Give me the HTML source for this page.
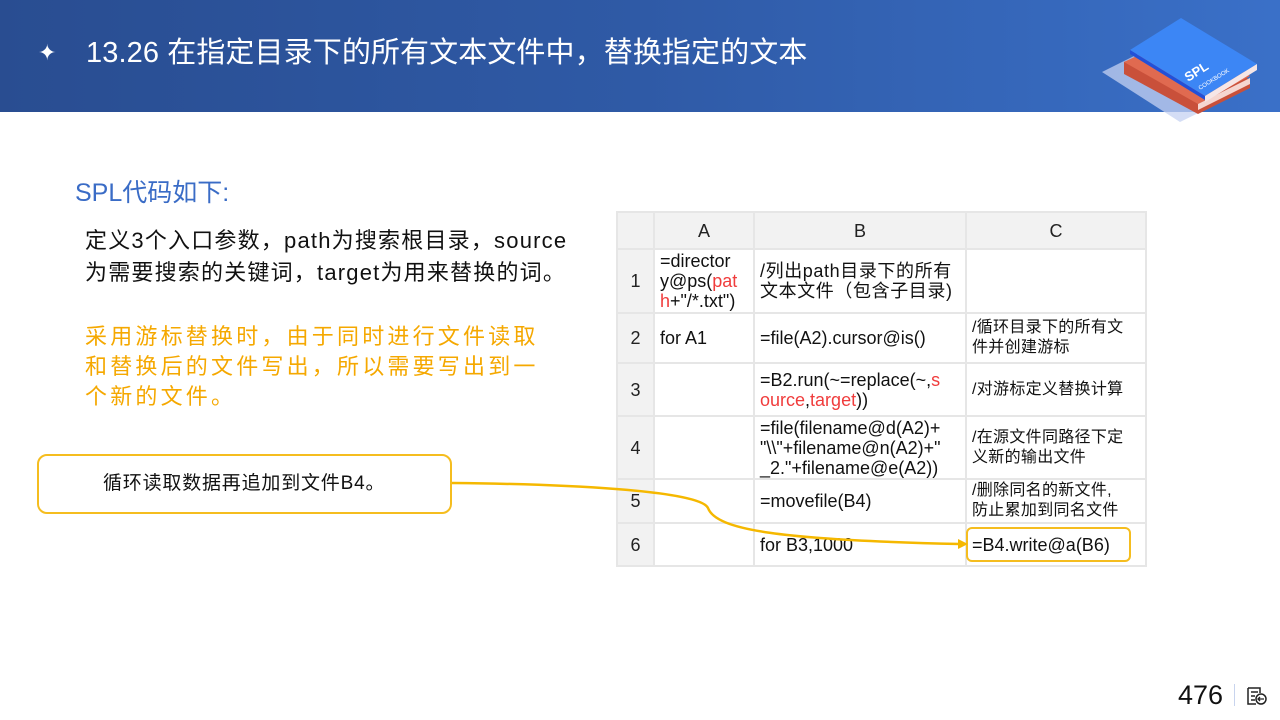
<!DOCTYPE html>
<html><head><meta charset="utf-8"><style>
*{margin:0;padding:0;box-sizing:border-box}
body{width:1280px;height:720px;position:relative;background:#fff;font-family:"Liberation Sans","Noto Sans CJK SC",sans-serif;overflow:hidden}
.hd{position:absolute;left:0;top:0;width:1280px;height:112px;background:linear-gradient(90deg,#294d91 0%,#2f5aa6 50%,#3a70c8 100%)}
.t{position:absolute;left:86px;top:33px;color:#fff;font-size:29px;line-height:40px;white-space:nowrap;letter-spacing:0.1px}
.star{position:absolute;left:38px;top:40px;color:#fff;font-size:22px}
.abs{position:absolute;white-space:nowrap}
table{position:absolute;left:616px;top:211px;border-collapse:collapse;font-size:18px;color:#111}
td{border:2px solid #e6e6e6;vertical-align:middle;padding:0 5px;line-height:20px}
td.h{background:#f2f2f2;text-align:center;color:#222}
td.c{font-size:16px;letter-spacing:0.3px}
.r{color:#f03c3c}
</style></head><body>
<div class="hd"></div>
<div class="star">✦</div>
<div class="t">13.26 在指定目录下的所有文本文件中，替换指定的文本</div>
<svg class="abs" style="left:1095px;top:12px" width="165" height="112" viewBox="1095 12 165 112">
<polygon points="1102,72 1150,48 1225,100 1180,122" fill="#c5d2f2" opacity="0.75"/>
<polygon points="1124,62 1184,40 1250,80 1250,88 1198,114 1124,74" fill="#c9503a"/>
<polygon points="1124,62 1184,34 1250,76 1198,104" fill="#e06a50"/>
<polygon points="1198,104 1250,78 1250,84 1198,110" fill="#f5d6d0"/>
<polygon points="1130,50 1181,18 1257,64 1205,96" fill="#3c86f5"/>
<polygon points="1130,50 1205,96 1205,100 1130,54" fill="#2250d8"/>
<polygon points="1205,96 1257,64 1257,70 1205,102" fill="#f6e6e6"/>
<text x="1188" y="82" fill="#fff" font-size="13" font-weight="bold" transform="rotate(-32 1188 82)">SPL</text>
<text x="1200" y="90" fill="#fff" font-size="6" transform="rotate(-32 1200 90)">COOKBOOK</text>
</svg>
<div class="abs" style="left:75px;top:173px;font-size:25px;color:#3a6cc6">SPL代码如下:</div>
<div class="abs" style="left:85px;top:225px;font-size:22px;line-height:32px;color:#111;letter-spacing:1.2px">定义3个入口参数，path为搜索根目录，source<br>为需要搜索的关键词，target为用来替换的词。</div>
<div class="abs" style="left:85px;top:322px;font-size:22px;line-height:30px;color:#f5a800;letter-spacing:3.2px">采用游标替换时，由于同时进行文件读取<br>和替换后的文件写出，所以需要写出到一<br>个新的文件。</div>
<div class="abs" style="left:37px;top:454px;width:415px;height:60px;border:2px solid #f5bd1f;border-radius:10px;font-size:19px;line-height:56px;padding-left:64px;color:#111;letter-spacing:0.8px">循环读取数据再追加到文件B4。</div>
<table>
<tr style="height:37px"><td class="h" style="width:37px"></td><td class="h" style="width:100px">A</td><td class="h" style="width:212px">B</td><td class="h" style="width:180px">C</td></tr>
<tr style="height:64px"><td class="h">1</td><td>=director<br>y@ps(<span class="r">pat<br>h</span>+"/*.txt")</td><td style="letter-spacing:0.6px">/列出path目录下的所有<br>文本文件（包含子目录)</td><td></td></tr>
<tr style="height:50px"><td class="h">2</td><td>for A1</td><td>=file(A2).cursor@is()</td><td class="c">/循环目录下的所有文<br>件并创建游标</td></tr>
<tr style="height:53px"><td class="h">3</td><td></td><td>=B2.run(~=replace(~,<span class="r">s<br>ource</span>,<span class="r">target</span>))</td><td class="c">/对游标定义替换计算</td></tr>
<tr style="height:63px"><td class="h">4</td><td></td><td>=file(filename@d(A2)+<br>"\\"+filename@n(A2)+"<br>_2."+filename@e(A2))</td><td class="c">/在源文件同路径下定<br>义新的输出文件</td></tr>
<tr style="height:44px"><td class="h">5</td><td></td><td>=movefile(B4)</td><td class="c">/删除同名的新文件,<br>防止累加到同名文件</td></tr>
<tr style="height:43px"><td class="h">6</td><td></td><td>for B3,1000</td><td>=B4.write@a(B6)</td></tr>
</table>
<div class="abs" style="left:966px;top:527px;width:165px;height:35px;border:2px solid #f5bd1f;border-radius:6px"></div>
<svg class="abs" style="left:0;top:0" width="1280" height="720"><path d="M452,483 C560,484 700,490 708,508 C716,530 780,540 960,544" fill="none" stroke="#f5b800" stroke-width="2.5"/><polygon points="958,539 968,544 958,549" fill="#f5b800"/></svg>
<div class="abs" style="left:1178px;top:680px;font-size:27px;color:#111">476</div>
<div class="abs" style="left:1234px;top:684px;width:1px;height:22px;background:#c8d4ee"></div>
<svg class="abs" style="left:1246px;top:686px" width="22" height="20" viewBox="0 0 22 20"><path d="M2 2h12v5M2 2v16h8M5 6h7M5 10h4M5 14h4" fill="none" stroke="#222" stroke-width="1.5"/><circle cx="15" cy="13" r="5" fill="none" stroke="#222" stroke-width="1.5"/><path d="M18 13h-6M14 11l-2 2 2 2" fill="none" stroke="#222" stroke-width="1.3"/></svg>
</body></html>
